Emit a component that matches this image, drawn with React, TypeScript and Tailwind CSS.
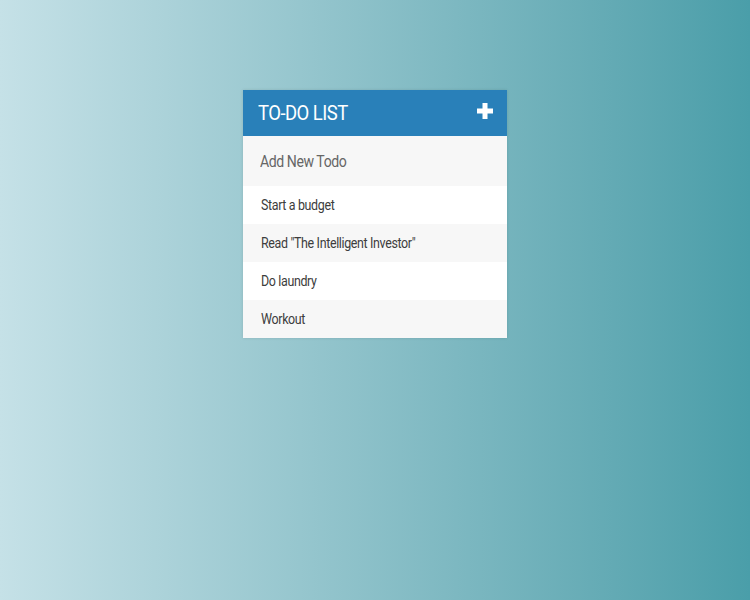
import React from "react";

const items = ["Start a budget", 'Read "The Intelligent Investor"', "Do laundry", "Workout"];

export default function App() {
  return (
    <div
      className="w-[750px] h-[600px] bg-gradient-to-r from-[#c5e1e7] to-[#4a9ea9] pt-[90px]"
      style={{ fontFamily: "Roboto, 'Liberation Sans', sans-serif" }}
    >
      <div className="ml-[243px] w-[264px] shadow-[0_0_3px_rgba(0,0,0,0.12)]">
        <div className="h-[46px] bg-[#2980b9] flex items-center justify-between pl-[15px] pr-[14px]">
          <h1 className="text-white text-[21px] font-normal tracking-[-0.6px] origin-left scale-x-[0.88] mt-[2px]">TO-DO LIST</h1>
          <svg width="16" height="16" viewBox="0 0 16 16" className="mt-[-4px]">
            <rect x="5.5" y="0" width="5" height="16" fill="white" />
            <rect x="0" y="5.5" width="16" height="5" fill="white" />
          </svg>
        </div>
        <div className="h-[50px] bg-[#f7f7f7] flex items-center pl-[17px] pt-[1px]">
          <span className="text-[#666] text-[16px] tracking-[-0.5px] origin-left scale-x-[0.88] inline-block">Add New Todo</span>
        </div>
        {items.map((t, i) => (
          <div
            key={t}
            className={`h-[38px] flex items-center pl-[18px] pt-[1px] ${i % 2 === 0 ? "bg-white" : "bg-[#f7f7f7]"}`}
          >
            <span className="text-[#3d3d3d] text-[14px] tracking-[-0.4px] origin-left scale-x-[0.89] inline-block">{t}</span>
          </div>
        ))}
      </div>
    </div>
  );
}
